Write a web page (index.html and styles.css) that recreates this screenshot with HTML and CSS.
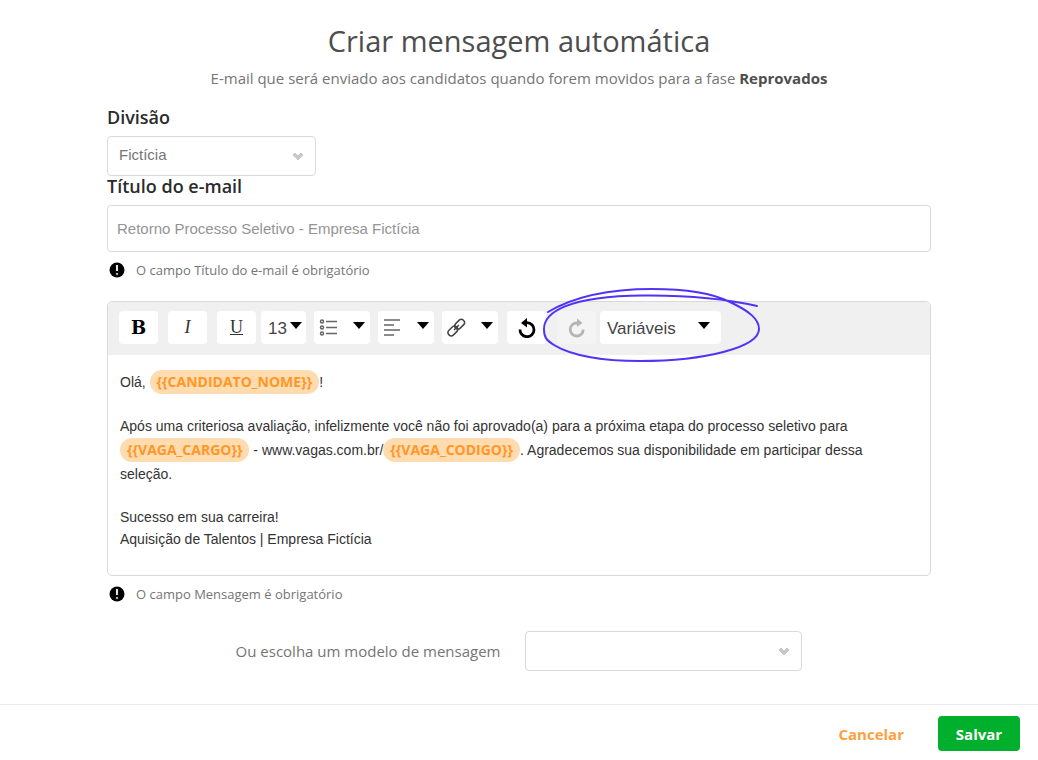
FILE: index.html
```html
<!DOCTYPE html>
<html lang="pt-BR">
  <head>
    <meta charset="utf-8">
    <title>Criar mensagem automática</title>
    <link rel="stylesheet" href="styles.css">
  </head>
  <body>
    <form action="">
      <main>
        <h1>Criar mensagem automática</h1>
        <p class="subtitle">E-mail que será enviado aos candidatos quando forem movidos para a fase <strong>Reprovados</strong></p>

        <label class="title" for="divisao">Divisão</label>
        <div class="select division">
          <select id="divisao"><option>Fictícia</option></select>
          <svg class="chevron" viewBox="0 0 12 9"><path d="M1 3l2-2 3 3 3-3 2 2-5 5z" /></svg>
        </div>

        <label class="title" for="titulo">Título do e-mail</label>
        <input id="titulo" type="text" placeholder="Retorno Processo Seletivo - Empresa Fictícia">
        <p class="hint">
          <svg class="alert" viewBox="0 0 16 16"><circle cx="8" cy="8" r="7.500" /><path d="M6.600 2.500h2.800v7H6.600zM6.600 10.700h2.800v2.500H6.600z" /></svg>
          O campo Título do e-mail é obrigatório
        </p>

        <div class="editor">
          <div class="toolbar">
            <div class="group styles">
              <button type="button" class="tool bold" aria-label="Negrito">B</button>
              <button type="button" class="tool italic" aria-label="Itálico">I</button>
              <button type="button" class="tool underline" aria-label="Sublinhado">U</button>
            </div>
            <div class="select size">
              <select aria-label="Tamanho"><option>13</option></select>
              <svg class="caret" viewBox="0 0 12 7"><path d="M0 0h12L6 7z" /></svg>
            </div>
            <div class="group menus">
              <button type="button" class="tool menu" aria-label="Lista">
                <svg class="icon" viewBox="0 0 20 20"><g class="line"><circle cx="3" cy="3.500" r="1.500" /><circle cx="3" cy="9.500" r="1.500" /><circle cx="3" cy="15.500" r="1.500" /><path d="M7 3.500h11M7 9.500h11M7 15.500h11" /></g></svg>
                <svg class="caret" viewBox="0 0 12 7"><path d="M0 0h12L6 7z" /></svg>
              </button>
              <button type="button" class="tool menu" aria-label="Alinhamento">
                <svg class="icon" viewBox="0 0 20 20"><path class="line" d="M1 2h16M1 7h10M1 12h16M1 17h10" /></svg>
                <svg class="caret" viewBox="0 0 12 7"><path d="M0 0h12L6 7z" /></svg>
              </button>
              <button type="button" class="tool menu" aria-label="Link">
                <svg class="icon" viewBox="0 0 20 20"><g class="link" transform="rotate(-45 10 10)"><rect x="-0.500" y="6" width="11" height="6.400" rx="3.200" /><rect x="9" y="6" width="11" height="6.400" rx="3.200" /><path d="M6.500 9.200h7" /></g></svg>
                <svg class="caret" viewBox="0 0 12 7"><path d="M0 0h12L6 7z" /></svg>
              </button>
            </div>
            <button type="button" class="tool undo" aria-label="Desfazer">
              <svg class="icon" viewBox="0 0 20 20"><path class="turn" d="M3 11.500A7 7 0 1 0 10 4.700H8" /><path d="M10 0v9.500L4 5z" /></svg>
            </button>
            <div class="group marked">
              <button type="button" class="tool redo" aria-label="Refazer" disabled>
                <svg class="icon" viewBox="0 0 20 20"><path class="turn" d="M16.200 11.500A6.500 6.500 0 1 1 10 5h2" /><path d="M10 0.500v8.500L15.500 5z" /></svg>
              </button>
              <div class="select variables">
                <select aria-label="Variáveis"><option>Variáveis</option></select>
                <svg class="caret" viewBox="0 0 12 7"><path d="M0 0h12L6 7z" /></svg>
              </div>
              <!-- hand-drawn ring around the variables menu -->
              <svg class="ring" viewBox="0 0 224 80"><path d="M8 26C35 10 72 3 112 3C150 3 174 8 190 16C209 25 219 33 219 43C219 61 166 75 100 75C65 75 32 70 14 59C6 54 4 51 4 43C4 27 27 10 103 9.500C148 9 182 12 217 20" /></svg>
            </div>
          </div>
          <div class="message" contenteditable="true" spellcheck="false" role="textbox" aria-label="Mensagem">
            <p>Olá, <span class="tag">{{CANDIDATO_NOME}}</span>!</p>
            <p>Após uma criteriosa avaliação, infelizmente você não foi aprovado(a) para a próxima etapa do processo seletivo para <span class="tag">{{VAGA_CARGO}}</span> - www.vagas.com.br/<span class="tag">{{VAGA_CODIGO}}</span>. Agradecemos sua disponibilidade em participar dessa seleção.</p>
            <p class="signature">Sucesso em sua carreira!<br>Aquisição de Talentos | Empresa Fictícia</p>
          </div>
        </div>
        <p class="hint">
          <svg class="alert" viewBox="0 0 16 16"><circle cx="8" cy="8" r="7.500" /><path d="M6.600 2.500h2.800v7H6.600zM6.600 10.700h2.800v2.500H6.600z" /></svg>
          O campo Mensagem é obrigatório
        </p>

        <div class="template">
          <label for="modelo">Ou escolha um modelo de mensagem</label>
          <div class="select model">
            <select id="modelo"><option></option></select>
            <svg class="chevron" viewBox="0 0 12 9"><path d="M1 3l2-2 3 3 3-3 2 2-5 5z" /></svg>
          </div>
        </div>
      </main>
      <footer>
        <button type="button" class="cancel">Cancelar</button>
        <button type="submit" class="save">Salvar</button>
      </footer>
    </form>
  </body>
</html>
```
FILE: styles.css
```css
* { box-sizing: border-box; }
body { margin: 0; background: #fff; color: #757575; font-family: "Open Sans", sans-serif; font-size: 15px; }
h1, p { margin: 0; }
button, input, select { margin: 0; font-family: inherit; }
button { border: none; padding: 0; cursor: pointer; }

main { padding: 20px 107px 33px; }
h1 { color: #4d4d4d; font-size: 29px; font-weight: 400; line-height: 42px; text-align: center; }
.subtitle { margin: 4px 0 17px; line-height: 24px; text-align: center; }
.subtitle strong { color: #4d4d4d; }
.title { display: block; color: #2b2b2b; font-size: 18px; font-weight: 600; line-height: 21px; margin-bottom: 8px; }

/* the arrow shares the grid cell of its select */
.select { display: grid; align-items: center; }
.select > * { grid-area: 1 / 1; }
.select select { appearance: none; width: 100%; height: 40px; border: 1px solid #d9d9d9; border-radius: 4px; padding: 0 11px 3px; background: #fff; color: #757575; font-family: "Liberation Sans", Arial, sans-serif; font-size: 15px; }
.select svg { justify-self: end; pointer-events: none; }
.chevron { width: 12px; height: 9px; margin-right: 12px; fill: #c8c8c8; stroke: #c8c8c8; stroke-width: 1; stroke-linejoin: round; }
.division { width: 209px; }

#titulo { display: block; width: 100%; height: 47px; border: 1px solid #d9d9d9; border-radius: 4px; padding: 0 9px; font-family: "Liberation Sans", Arial, sans-serif; font-size: 15px; }
#titulo::placeholder { color: #949494; }
.hint { display: flex; align-items: center; gap: 11px; height: 20px; margin: 8px 0 0 2px; font-size: 13px; }
.alert { width: 16px; height: 16px; }
.alert path { fill: #fff; stroke: #000; stroke-width: 1; }

.editor { margin-top: 21px; border: 1px solid #d9d9d9; border-radius: 5px; }
.toolbar { display: flex; padding: 9px 11px 11px; background: #f0f0f0; border-radius: 4px 4px 0 0; }
.group { display: flex; }
.tool { display: flex; align-items: center; justify-content: center; width: 39px; height: 33px; border-radius: 4px; background: #fff; color: #333; }
.styles { gap: 10px; margin-right: 5px; }
.bold { color: #000; font-family: "DejaVu Serif", serif; font-size: 18px; font-weight: bold; }
.italic { font-style: italic; }
.italic, .underline { font-family: "Liberation Serif", serif; font-size: 18px; }
.underline { text-decoration: underline; }
.menus { gap: 8px; margin: 0 9px 0 8px; }
.menu { justify-content: space-between; width: 56px; padding: 0 5px; }
.icon { width: 20px; height: 20px; }
.caret { width: 12px; height: 7px; margin-bottom: 4px; fill: #000; }
.line { fill: none; stroke: #666; stroke-width: 1.500; }
.link { fill: none; stroke: #444; stroke-width: 1.500; }
.turn { fill: none; stroke: #000; stroke-width: 2.800; }
.toolbar .select select { height: 33px; border: none; padding: 2px 7px 0; color: #444; font-size: 17px; }
.size { width: 45px; }
.toolbar .select .caret { margin-right: 4px; }
.toolbar .variables .caret { margin-right: 11px; }
.variables { width: 121px; }
.marked { position: relative; gap: 4px; margin-left: 11px; }
.redo { background: #f4f4f4; fill: #b5b5b5; }
.redo .turn { stroke: #b5b5b5; }
.ring { position: absolute; left: -17px; top: -25px; width: 224px; height: 80px; fill: none; stroke: #5233f5; stroke-width: 2; stroke-linecap: round; pointer-events: none; }

.message { padding: 15px 40px 25px 12px; color: #333; font-family: "Liberation Sans", Arial, sans-serif; font-size: 14px; line-height: 24px; outline: none; }
.message p { margin-bottom: 20px; }
.message .signature { margin: 0; line-height: 22px; }
.tag { display: inline-block; height: 24px; border-radius: 12px; padding: 0 7px; background: #ffdcb0; color: #ff9727; font-family: "Open Sans", sans-serif; font-weight: bold; line-height: 24px; vertical-align: top; }

.template { display: flex; align-items: center; justify-content: center; gap: 25px; margin-top: 27px; }
.model { width: 277px; }

footer { display: flex; justify-content: flex-end; gap: 34px; padding: 11px 18px 9px; border-top: 1px solid #ececec; }
footer button { height: 35px; border-radius: 4px; background: none; font-size: 15px; font-weight: bold; }
.cancel { color: #ffa040; }
.save { width: 82px; }
footer .save { background: #00af2c; color: #fff; }
```
